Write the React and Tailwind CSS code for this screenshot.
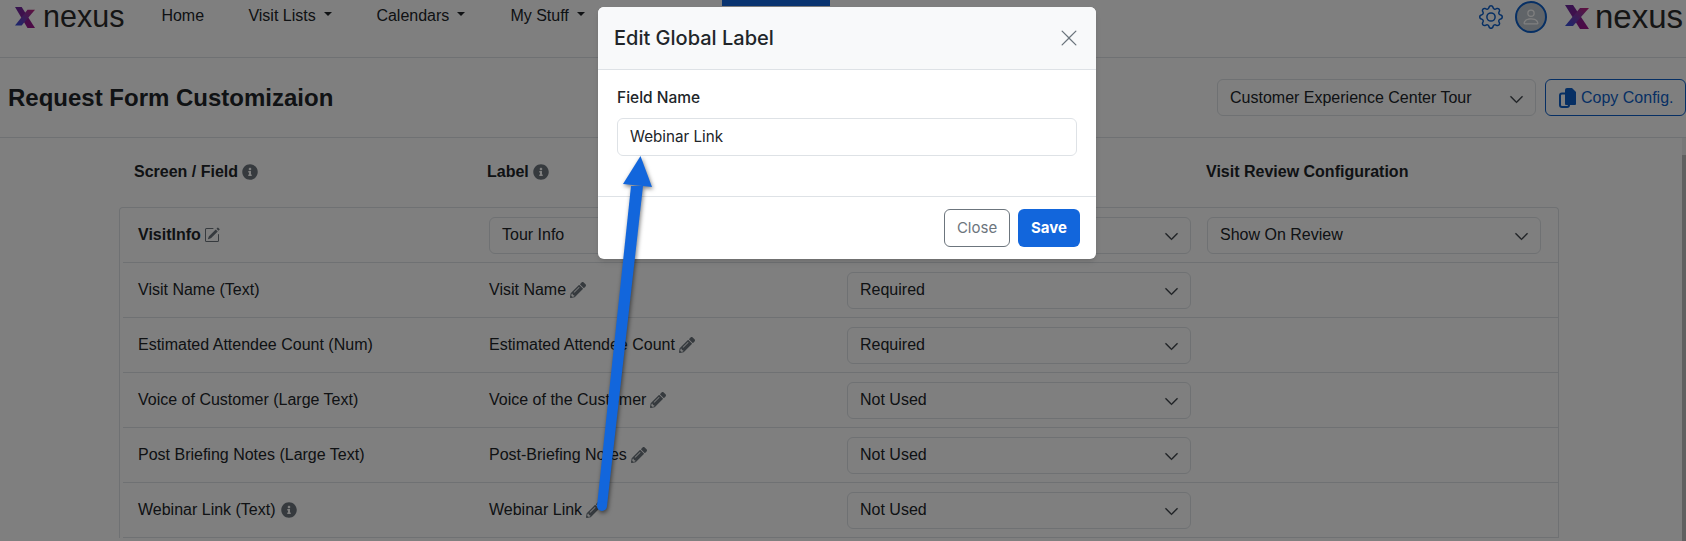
import { BsGear, BsPerson, BsPencilSquare, BsChevronDown, BsXLg } from "react-icons/bs";
import { FaInfoCircle, FaPencilAlt } from "react-icons/fa";

const rows = [
  { field: "Visit Name (Text)", label: "Visit Name", value: "Required" },
  { field: "Estimated Attendee Count (Num)", label: "Estimated Attendee Count", value: "Required" },
  { field: "Voice of Customer (Large Text)", label: "Voice of the Customer", value: "Not Used" },
  { field: "Post Briefing Notes (Large Text)", label: "Post-Briefing Notes", value: "Not Used" },
  { field: "Webinar Link (Text)", label: "Webinar Link", value: "Not Used", info: true },
];

const Logo = ({ markClass, textClass }) => (
  <div className="flex items-center">
    <svg viewBox="0 0 24 24" className={markClass} preserveAspectRatio="none">
      <defs>
        <linearGradient id="nexusA" x1="0" y1="0" x2="1" y2="1">
          <stop offset="0" stopColor="#6a2aa0" />
          <stop offset="1" stopColor="#a0128a" />
        </linearGradient>
        <linearGradient id="nexusB" x1="1" y1="0" x2="0" y2="1">
          <stop offset="0" stopColor="#c42078" />
          <stop offset="1" stopColor="#3050e0" />
        </linearGradient>
      </defs>
      <polygon points="0,0 8,0 24,24 15,24" fill="url(#nexusA)" />
      <polygon points="15,3 24,3 8,21 0,21" fill="url(#nexusB)" />
    </svg>
    <span className={textClass}>nexus</span>
  </div>
);

const Select = ({ value, className }) => (
  <div className={`flex h-[37px] items-center justify-between rounded-md border border-[#dee2e6] bg-white pl-3 pr-[11px] text-[#212529] ${className}`}>
    <span>{value}</span>
    <BsChevronDown className="mt-[3px] text-[#343a40]" size={15} strokeWidth={0.5} />
  </div>
);

const NavLink = ({ label, caret, className }) => (
  <div className={`flex items-center text-[#212529] ${className}`}>
    {label}
    {caret && <span className="ml-[8px] mb-[3px] border-x-[4.5px] border-t-[4.5px] border-x-transparent border-t-[#212529]" />}
  </div>
);

const CopyIcon = () => (
  <svg viewBox="0 0 17 20" className="h-[20px] w-[17px]" fill="none">
    <path d="M6 5.5H3a2 2 0 0 0-2 2V17a2 2 0 0 0 2 2h5a2 2 0 0 0 2-2" stroke="currentColor" strokeWidth="2" />
    <path d="M8 0h5l4 4v12a1 1 0 0 1-1 1H7a1 1 0 0 1-1-1V2a2 2 0 0 1 2-2z" fill="currentColor" />
  </svg>
);

const App = () => {
  return (
    <div className="relative h-[541px] w-[1686px] overflow-hidden bg-white font-['Liberation_Sans',Arial,sans-serif] text-[#212529]">
      {/* Navbar */}
      <div className="flex h-[58px] items-start border-b border-[#dee2e6] pl-[15px] pt-[6px]">
        <Logo markClass="h-[21px] w-[20px] mt-[1px]" textClass="ml-[8px] -mt-[2px] text-[30.5px] leading-[20px] text-[#2b2b2b]" />
        <div className="ml-[37px] -mt-[1px] flex h-[21px] items-center text-base">
          <NavLink label="Home" className="w-[87px]" />
          <NavLink label="Visit Lists" caret className="w-[128px]" />
          <NavLink label="Calendars" caret className="w-[134px]" />
          <NavLink label="My Stuff" caret className="w-[212px]" />
          <div className="mb-[26px] h-[7px] w-[108px] bg-[#1469e0]" />
        </div>
        <div className="ml-auto -mt-[5px] flex items-center pr-[3px]">
          <BsGear className="text-[#0d5fc9]" size={24} />
          <div className="ml-[12px] flex h-[32px] w-[32px] items-center justify-center rounded-full border-2 border-[#0d5fc9] bg-[#c0c8d0]">
            <BsPerson className="text-white" size={20} />
          </div>
          <Logo markClass="ml-[18px] h-[24px] w-[24px]" textClass="ml-[6px] text-[33px] leading-[24px] text-[#2b2b2b]" />
        </div>
      </div>

      {/* Page title */}
      <div className="flex h-[80px] items-center justify-between border-b border-[#dee2e6] pl-[8px]">
        <h1 className="text-[24px] font-bold">Request Form Customizaion</h1>
        <div className="flex items-center gap-[9px] text-base">
          <Select value="Customer Experience Center Tour" className="w-[319px]" />
          <div className="flex h-[37px] w-[141px] items-center gap-[5px] rounded-md border border-[#0d5fc9] pl-[13px] text-[#0d5fc9]">
            <CopyIcon />
            Copy Config.
          </div>
        </div>
      </div>

      {/* Field table */}
      <div className="pl-[119px] pr-[127px] text-base">
        <div className="flex h-[69px] items-center pb-[2px] font-bold">
          <div className="ml-[15px] flex w-[353px] items-center gap-[4px]">
            Screen / Field <FaInfoCircle className="text-[#6c757d]" size={16} />
          </div>
          <div className="flex w-[719px] items-center gap-[4px]">
            Label <FaInfoCircle className="text-[#6c757d]" size={16} />
          </div>
          <div>Visit Review Configuration</div>
        </div>
        <div className="rounded-t border-x border-t border-[#dee2e6] pl-[3px]">
          <div className="flex h-[55px] items-center border-b border-[#dee2e6]">
            <div className="flex w-[366px] items-center gap-[3px] pl-[15px] font-bold">
              VisitInfo <BsPencilSquare className="text-[#6c757d]" size={16} />
            </div>
            <Select value="Tour Info" className="w-[342px]" />
            <Select value="" className="ml-[16px] w-[344px]" />
            <Select value="Show On Review" className="ml-[16px] w-[334px]" />
          </div>
          {rows.map((row) => (
            <div key={row.field} className="flex h-[55px] items-center border-b border-[#dee2e6]">
              <div className="flex w-[366px] items-center gap-[5px] pl-[15px]">
                {row.field}
                {row.info && <FaInfoCircle className="text-[#6c757d]" size={16} />}
              </div>
              <div className="flex w-[358px] items-center gap-[4px]">
                {row.label} <FaPencilAlt className="text-[#6c757d]" size={16} />
              </div>
              <Select value={row.value} className="w-[344px]" />
            </div>
          ))}
        </div>
      </div>

      {/* Page scrollbar */}
      <div className="absolute right-0 top-[138px] h-[403px] w-[4px] bg-[#f1f1f1]">
        <div className="mt-[17px] h-[386px] bg-[#c1c1c1]" />
      </div>

      {/* Modal backdrop */}
      <div className="absolute inset-0 bg-black/50" />

      {/* Edit Global Label modal */}
      <div className="absolute left-[598px] top-[7px] w-[498px] overflow-hidden rounded-md bg-white font-['Inter',sans-serif] shadow-md">
        <div className="flex h-[63px] items-center justify-between border-b border-[#dee2e6] bg-[#f8f9fa] pl-[16px] pr-[17px]">
          <span className="text-[20px] font-medium">Edit Global Label</span>
          <BsXLg className="text-[#6c757d]" size={20} />
        </div>
        <div className="h-[127px] border-b border-[#dee2e6] px-[19px] pt-[17px]">
          <div className="text-[15.5px] font-medium leading-[21px]">Field Name</div>
          <div className="mt-[10px] flex h-[38px] items-center rounded-md border border-[#dee2e6] px-[12px] text-[15.2px]">
            Webinar Link
          </div>
        </div>
        <div className="flex h-[62px] items-center justify-end gap-[8px] pr-[16px] text-[15px]">
          <div className="flex h-[38px] w-[66px] items-center justify-center rounded-md border border-[#6c757d] text-[#6c757d]">Close</div>
          <div className="flex h-[38px] w-[62px] items-center justify-center rounded-md bg-[#1266dc] font-bold text-white">Save</div>
        </div>
      </div>

      {/* Annotation arrow */}
      <svg className="pointer-events-none absolute inset-0 h-[541px] w-[1686px]" viewBox="0 0 1686 541">
        <g className="drop-shadow-[1px_2px_2px_rgba(0,0,0,0.5)]">
          <polygon points="597,506 607,506 643,186 631,186" fill="#1266dc" />
          <circle cx="602" cy="506" r="5" fill="#1266dc" />
          <polygon points="640.5,156 623,184 652,187" fill="#1266dc" />
        </g>
      </svg>
    </div>
  );
};

export default App;
